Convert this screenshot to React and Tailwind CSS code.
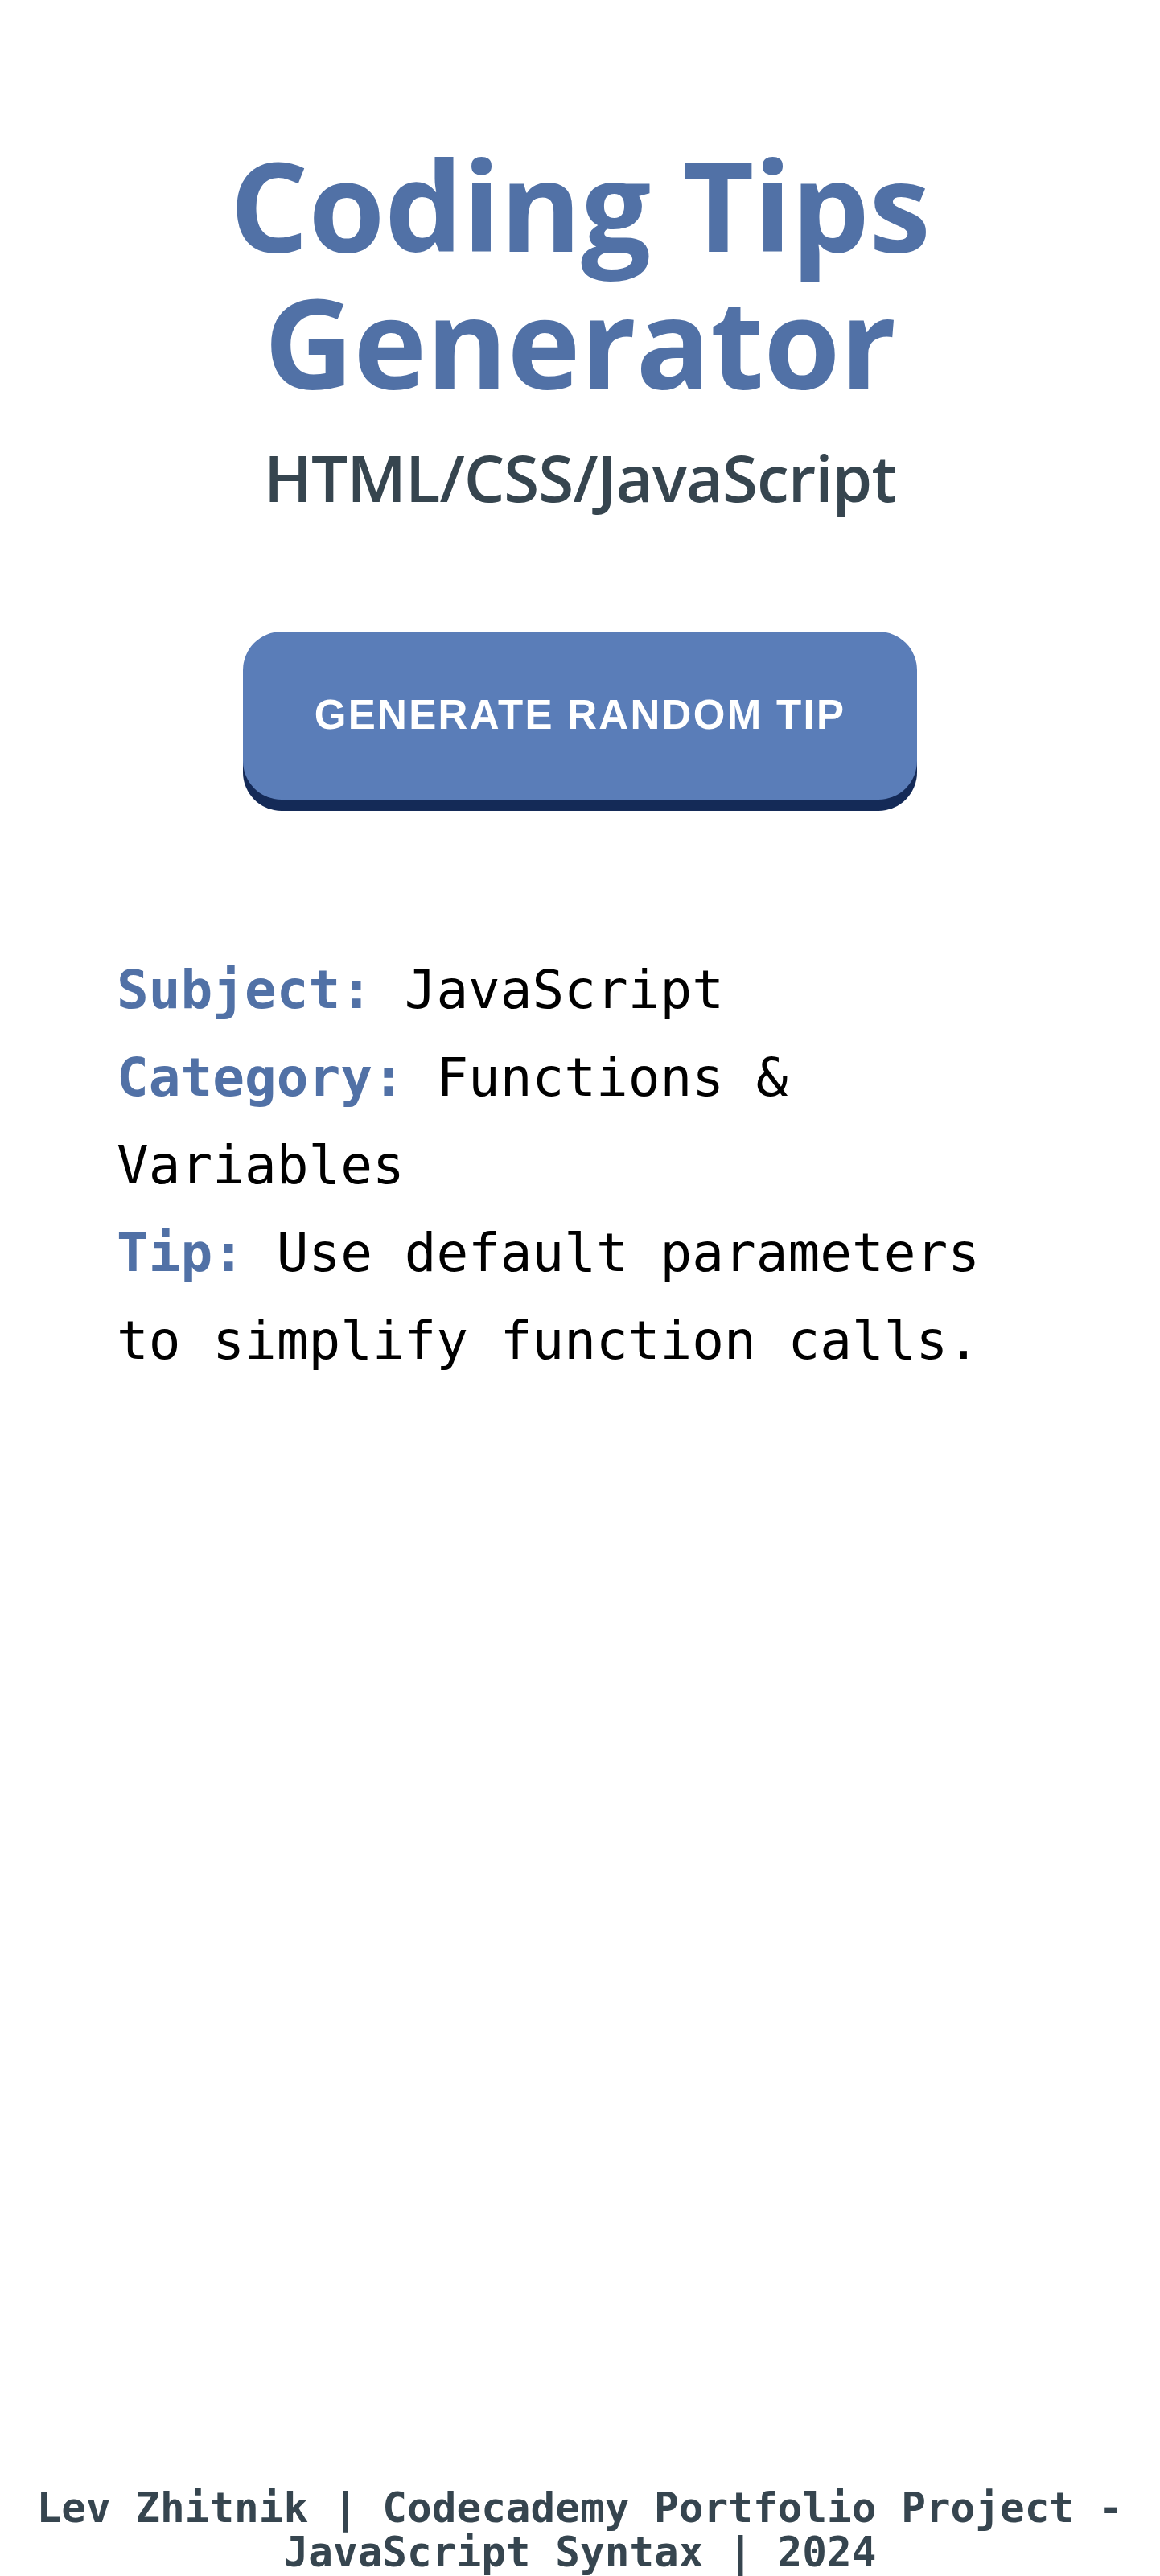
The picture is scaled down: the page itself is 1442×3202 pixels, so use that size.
const tip = {
  subject: "JavaScript",
  category: "Functions & Variables",
  text: "Use default parameters to simplify function calls."
};

export default function App() {
  return (
    <div className="flex min-h-screen flex-col bg-white">
      <main className="flex flex-col items-center">
        <h1 className="mt-[168px] text-center font-['Open_Sans',sans-serif] text-[154px] font-bold leading-[170px] tracking-[-0.5px] text-[#5171a6]">
          Coding Tips
          <br />
          Generator
        </h1>
        <h2 className="mt-[30px] text-center font-['Open_Sans',sans-serif] text-[80px] font-semibold leading-[109px] tracking-[-1px] text-[#36454f]">
          HTML/CSS/JavaScript
        </h2>

        <button
          type="button"
          className="mt-[138px] h-[209px] w-[838px] rounded-[48px] bg-[#5a7db8] font-['Liberation_Sans',Arial,sans-serif] text-[51px] font-bold uppercase tracking-[2.3px] text-white shadow-[0_14px_0_#142a57]"
        >
          Generate random tip
        </button>

        <div className="mt-[182px] w-[1152px] font-['DejaVu_Sans_Mono',monospace] text-[66px] leading-[109px] text-black">
          <p>
            <span className="font-bold text-[#5171a6]">Subject:</span> {tip.subject}
          </p>
          <p>
            <span className="font-bold text-[#5171a6]">Category:</span> {tip.category}
          </p>
          <p>
            <span className="font-bold text-[#5171a6]">Tip:</span> {tip.text}
          </p>
        </div>
      </main>

      <footer className="mt-auto px-4 pb-[2px] text-center font-['DejaVu_Sans_Mono',monospace] text-[51px] font-bold leading-[55px] text-[#36454f]">
        Lev Zhitnik | Codecademy Portfolio Project - JavaScript Syntax | 2024
      </footer>
    </div>
  );
}
